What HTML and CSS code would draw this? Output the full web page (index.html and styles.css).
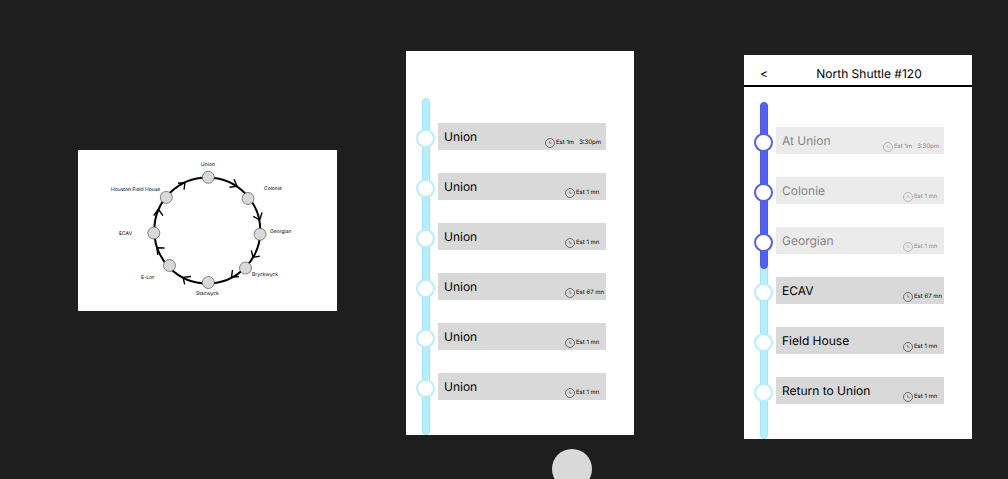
FILE: index.html
```html
<!DOCTYPE html>
<html lang="en">
<head>
<meta charset="utf-8">
<title>Shuttle tracker frames</title>
<link rel="stylesheet" href="styles.css">
</head>
<body>
<svg class="symbols" aria-hidden="true">
  <symbol id="clock" viewBox="0 0 10 10">
    <circle cx="5" cy="5" r="4.5" fill="none" stroke="currentColor" stroke-width=".5"/>
    <path d="M4.7 2.9V5.2H6.5" fill="none" stroke="currentColor" stroke-width=".4"/>
  </symbol>
</svg>
<main class="canvas">
  <section class="frame frame-map">
    <svg class="map" viewBox="78 150 259 161" role="img" aria-label="Shuttle loop">
      <circle class="loop" cx="207.3" cy="230.5" r="53"/>
      <g class="arrows">
        <path d="M178 183.2L185 182.5L184 189.7"/>
        <path d="M153.7 215.7L158.3 209.3L163 215.7"/>
        <path d="M234 179.3L237 186.3L229.5 187.3"/>
        <path d="M253.3 216.3L259.7 220L262 212.5"/>
        <path d="M251.3 250.3L253 257.3L259.7 256.2"/>
        <path d="M232.5 270L231.5 277.3L239 276.5"/>
        <path d="M191 276.5L183 277.3L184.7 284.3"/>
        <path d="M164.5 248L157 247.7L157.7 255"/>
      </g>
      <g class="nodes">
        <circle cx="208.3" cy="177.3" r="6"/>
        <circle cx="248" cy="198.5" r="6"/>
        <circle cx="260" cy="234.3" r="6"/>
        <circle cx="245.5" cy="268" r="6"/>
        <circle cx="208.3" cy="282.5" r="6"/>
        <circle cx="169.5" cy="265.5" r="6"/>
        <circle cx="153.8" cy="233" r="6"/>
        <circle cx="166.3" cy="197.4" r="6"/>
      </g>
      <g class="labels">
        <text x="201" y="166">Union</text>
        <text x="264" y="190">Colonie</text>
        <text x="270" y="233">Georgian</text>
        <text x="252" y="276">Bryckwyck</text>
        <text x="196" y="295">Stacwyck</text>
        <text x="141" y="279">E-Lot</text>
        <text x="119" y="235">ECAV</text>
        <text x="111" y="191">Houston Field House</text>
      </g>
    </svg>
  </section>

  <section class="frame frame-stops">
    <div class="route">
      <div class="rail"></div>
      <ol class="stops">
        <li class="stop"><span class="dot"></span><div class="card"><span class="name">Union</span><span class="meta meta-wide"><svg class="clock"><use href="#clock"/></svg><span>Est 1m</span><span class="time">3:30pm</span></span></div></li>
        <li class="stop"><span class="dot"></span><div class="card"><span class="name">Union</span><span class="meta"><svg class="clock"><use href="#clock"/></svg><span>Est 1 mn</span></span></div></li>
        <li class="stop"><span class="dot"></span><div class="card"><span class="name">Union</span><span class="meta"><svg class="clock"><use href="#clock"/></svg><span>Est 1 mn</span></span></div></li>
        <li class="stop"><span class="dot"></span><div class="card"><span class="name">Union</span><span class="meta"><svg class="clock"><use href="#clock"/></svg><span>Est 67 mn</span></span></div></li>
        <li class="stop"><span class="dot"></span><div class="card"><span class="name">Union</span><span class="meta"><svg class="clock"><use href="#clock"/></svg><span>Est 1 mn</span></span></div></li>
        <li class="stop"><span class="dot"></span><div class="card"><span class="name">Union</span><span class="meta"><svg class="clock"><use href="#clock"/></svg><span>Est 1 mn</span></span></div></li>
      </ol>
    </div>
  </section>

  <section class="frame frame-shuttle">
    <header class="bar">
      <button class="back" type="button" aria-label="Back">&lt;</button>
      <h1 class="title">North Shuttle #120</h1>
    </header>
    <div class="route route-live">
      <div class="rail"></div>
      <div class="rail rail-done"></div>
      <ol class="stops">
        <li class="stop passed"><span class="dot"></span><div class="card"><span class="name">At Union</span><span class="meta meta-wide"><svg class="clock"><use href="#clock"/></svg><span>Est 1m</span><span class="time">3:30pm</span></span></div></li>
        <li class="stop passed"><span class="dot"></span><div class="card"><span class="name">Colonie</span><span class="meta"><svg class="clock"><use href="#clock"/></svg><span>Est 1 mn</span></span></div></li>
        <li class="stop passed"><span class="dot"></span><div class="card"><span class="name">Georgian</span><span class="meta"><svg class="clock"><use href="#clock"/></svg><span>Est 1 mn</span></span></div></li>
        <li class="stop"><span class="dot"></span><div class="card"><span class="name">ECAV</span><span class="meta"><svg class="clock"><use href="#clock"/></svg><span>Est 67 mn</span></span></div></li>
        <li class="stop"><span class="dot"></span><div class="card"><span class="name">Field House</span><span class="meta"><svg class="clock"><use href="#clock"/></svg><span>Est 1 mn</span></span></div></li>
        <li class="stop"><span class="dot"></span><div class="card"><span class="name">Return to Union</span><span class="meta"><svg class="clock"><use href="#clock"/></svg><span>Est 1 mn</span></span></div></li>
      </ol>
    </div>
  </section>

  <div class="loose-dot"></div>
</main>
</body>
</html>
```

FILE: styles.css
```css
* { box-sizing: border-box; }

body {
  margin: 0;
  background: #1e1e1e;
  color: #000;
  font-family: Inter, "Liberation Sans", sans-serif;
  text-rendering: geometricPrecision;
}

.symbols { display: none; }

.canvas {
  position: relative;
  min-height: 100vh;
  overflow: hidden;
}

/* Frames placed on the free canvas */
.frame {
  position: absolute;
  background: #fff;
}

.frame-map { left: 78px; top: 150px; width: 259px; }
.frame-stops { left: 406px; top: 51px; width: 228px; padding-top: 47px; }
.frame-shuttle { left: 744px; top: 55px; width: 228px; }

.loose-dot {
  position: absolute;
  left: 552px;
  top: 449px;
  width: 40px;
  height: 40px;
  border-radius: 50%;
  background: #d9d9d9;
}

/* Loop map */
.map { display: block; width: 100%; }
.loop { fill: none; stroke: #000; stroke-width: 2; }
.arrows { fill: none; stroke: #000; stroke-width: 1.4; }
.nodes { fill: #d9d9d9; stroke: #555; stroke-width: .7; }
.labels { font-size: 5px; }

/* Header */
.bar {
  display: grid;
  grid-template-columns: 40px 1fr;
  align-items: center;
  height: 32px;
  padding: 8px 18px 0 0;
  border-bottom: 2px solid #000;
}

.back {
  padding: 0;
  border: 0;
  background: none;
  color: inherit;
  font: inherit;
  font-size: 12px;
  line-height: 16px;
}

.title {
  margin: 0;
  font-size: 12px;
  font-weight: 400;
  line-height: 16px;
  text-align: center;
}

/* Route */
.route {
  display: grid;
  grid-template-columns: 1fr;
  padding: 0 28px 0 10px;
}

.route-live { padding-top: 15px; }

.rail,
.stops { grid-area: 1 / 1; }

.rail {
  width: 8px;
  margin-left: 6px;
  border: 1px solid #9ee6fb;
  border-radius: 4px;
  background: #b6edff;
}

.rail-done {
  height: 167px;
  border-color: #4a5aea;
  background: #5360f5;
}

.stops {
  display: grid;
  gap: 23px;
  margin: 0;
  padding: 25px 0 35px;
  list-style: none;
}

.stop {
  display: grid;
  grid-template-columns: 19px 1fr;
  column-gap: 3px;
  align-items: end;
}

.dot {
  height: 19px;
  margin-bottom: 2px;
  border: 2px solid #b6edff;
  border-radius: 50%;
  background: #fff;
}

.passed .dot { border-color: #5360e8; }

.card {
  display: flex;
  justify-content: space-between;
  height: 27px;
  padding-left: 6px;
  background: #d9d9d9;
}

.passed .card { opacity: .5; }

.name {
  font-size: 12px;
  line-height: 27px;
  white-space: nowrap;
}

.meta {
  display: flex;
  align-items: center;
  align-self: flex-end;
  gap: 1px;
  width: 41px;
  height: 14px;
  font-size: 6px;
  line-height: 8px;
  white-space: nowrap;
}

.meta-wide { width: 61px; }
.time { margin-left: 4px; }

.clock {
  flex: none;
  width: 10px;
  height: 10px;
}
```
